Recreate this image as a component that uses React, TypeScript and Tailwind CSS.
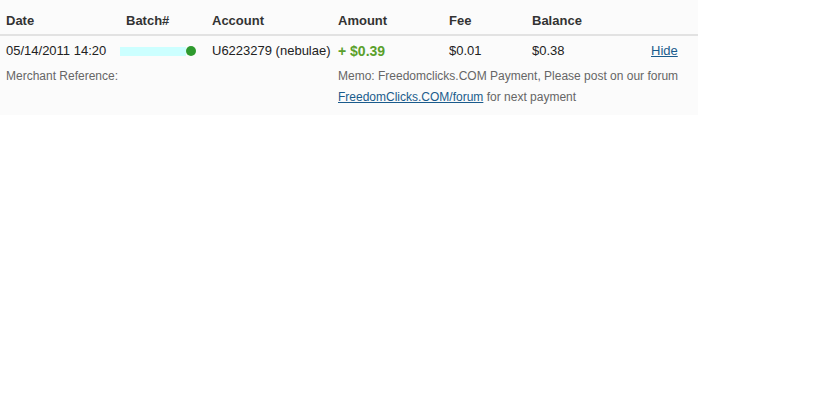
import React from "react"

const App = () => {
  return (
    <div className="min-h-[411px] w-[840px] bg-white font-['Liberation_Sans',Arial,sans-serif] text-[13px] text-[#222]">
      <div className="w-[698px] bg-[#fbfbfb] pb-[7px]">
        <div className="grid h-[36px] grid-cols-[120px_92px_126px_111px_83px_119px_1fr] items-center border-b-2 border-[#e2e2e2] pt-[8px] text-[13px] font-bold text-[#333]">
          <div className="pl-[6px]">Date</div>
          <div className="pl-[6px]">Batch#</div>
          <div>Account</div>
          <div>Amount</div>
          <div>Fee</div>
          <div>Balance</div>
          <div></div>
        </div>
        <div className="grid h-[30px] grid-cols-[120px_92px_126px_111px_83px_119px_1fr] items-center">
          <div className="pl-[6px]">05/14/2011 14:20</div>
          <div className="flex items-center">
            <div className="h-[9px] w-[66px] bg-[#ccffff]" />
            <div className="h-[10px] w-[10px] rounded-full bg-[#2e9a2e]" />
          </div>
          <div>U6223279 (nebulae)</div>
          <div className="text-[14px] font-bold text-[#5aa02c]">+ $0.39</div>
          <div>$0.01</div>
          <div>$0.38</div>
          <div>
            <a href="#" className="text-[#1a5b8c] underline">
              Hide
            </a>
          </div>
        </div>
        <div className="grid grid-cols-[338px_1fr] text-[12px] leading-[21px] text-[#666]">
          <div className="pl-[6px]">Merchant Reference:</div>
          <div>
            <div>Memo: Freedomclicks.COM Payment, Please post on our forum</div>
            <div>
              <a href="#" className="text-[#1a5b8c] underline">
                FreedomClicks.COM/forum
              </a>{" "}
              for next payment
            </div>
          </div>
        </div>
      </div>
    </div>
  )
}

export default App
